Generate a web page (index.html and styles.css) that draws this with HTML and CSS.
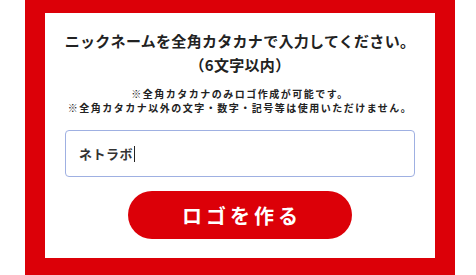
FILE: index.html
```html
<!DOCTYPE html>
<html lang="ja">
<head>
<meta charset="utf-8">
<link rel="stylesheet" href="styles.css">
</head>
<body>
<div class="page">
  <div class="panel">
    <div class="card">
      <h1 class="title">ニックネームを全角カタカナで入力してください。<br>（6文字以内）</h1>
      <p class="notes">※全角カタカナのみロゴ作成が可能です。<br>※全角カタカナ以外の文字・数字・記号等は使用いただけません。</p>
      <div class="field"><span class="value">ネトラボ</span><span class="caret"></span></div>
      <div class="actions"><button class="btn">ロゴを作る</button></div>
    </div>
  </div>
</div>
</body>
</html>
```
FILE: styles.css
```css
html, body {
  margin: 0;
  padding: 0;
  background: #ffffff;
}
body {
  font-family: "Noto Sans CJK JP", "Noto Sans", sans-serif;
  color: #222;
}
.page {
  width: 476px;
  height: 275px;
  padding-left: 25px;
  box-sizing: border-box;
  overflow: hidden;
}
.panel {
  width: 430px;
  background: #dc0008;
  padding: 13px 20px 17px;
  box-sizing: border-box;
}
.card {
  background: #fff;
  height: 245px;
  box-sizing: border-box;
  padding: 16px 0 0;
  display: flex;
  flex-direction: column;
  align-items: center;
}
.title {
  margin: 0;
  font-size: 15px;
  line-height: 24px;
  font-weight: 700;
  letter-spacing: 0.3px;
  text-align: center;
  white-space: nowrap;
  color: #222;
}
.notes {
  margin: 10px 0 0;
  font-size: 10px;
  line-height: 14px;
  font-weight: 700;
  letter-spacing: 1.5px;
  text-align: center;
  white-space: nowrap;
  color: #222;
}
.field {
  margin-top: 15px;
  width: 350px;
  height: 47px;
  box-sizing: border-box;
  border: 1px solid #9fb0e2;
  border-radius: 4px;
  display: flex;
  align-items: center;
  padding-left: 13px;
}
.value {
  font-size: 13px;
  font-weight: 700;
  color: #333;
  letter-spacing: 0.5px;
}
.caret {
  display: inline-block;
  width: 1px;
  height: 16px;
  background: #222;
  margin-left: 1px;
}
.actions {
  margin-top: 14px;
}
.btn {
  width: 224px;
  height: 48px;
  border: none;
  border-radius: 24px;
  background: #dc0008;
  color: #fff;
  font-family: "Noto Sans CJK JP", "Noto Sans", sans-serif;
  font-size: 20px;
  font-weight: 700;
  letter-spacing: 4px;
  padding: 0 0 0 4px;
}
```
